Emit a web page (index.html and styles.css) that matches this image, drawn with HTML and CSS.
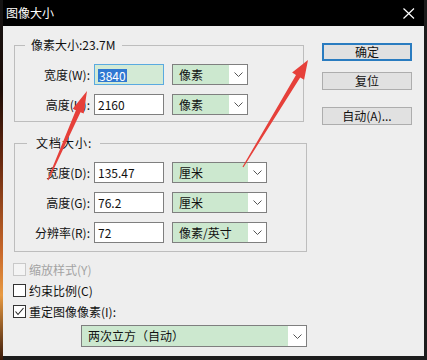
FILE: index.html
```html
<!DOCTYPE html>
<html lang="zh-CN">
<head>
    <meta charset="UTF-8">
    <meta name="viewport" content="width=device-width, initial-scale=1.0">
    <title>图像大小</title>
    <link rel="stylesheet" href="styles.css">
</head>
<body>
    <div class="window">
        <div class="titlebar">
            <span class="title">图像大小</span>
            <svg class="close" width="12" height="11" viewBox="0 0 12 11">
                <path d="M0.5 0.5 L11 10.5 M11 0.5 L0.5 10.5" stroke="#fff" stroke-width="1.2" fill="none"/>
            </svg>
        </div>

        <div class="content">
            <div class="main">
                <fieldset class="group group-pixel">
                    <legend>像素大小:23.7M</legend>
                    <div class="row">
                        <label>宽度(W):</label>
                        <div class="field focused"><span class="sel">3840</span></div>
                        <div class="select">
                            <span class="val">像素</span>
                            <span class="drop"><svg width="9" height="5" viewBox="0 0 9 5"><polyline points="0.5,0.5 4.5,4.5 8.5,0.5" fill="none" stroke="#555"/></svg></span>
                        </div>
                    </div>
                    <div class="row">
                        <label>高度(H):</label>
                        <div class="field">2160</div>
                        <div class="select">
                            <span class="val">像素</span>
                            <span class="drop"><svg width="9" height="5" viewBox="0 0 9 5"><polyline points="0.5,0.5 4.5,4.5 8.5,0.5" fill="none" stroke="#555"/></svg></span>
                        </div>
                    </div>
                </fieldset>

                <fieldset class="group group-doc">
                    <legend>文档大小:</legend>
                    <div class="row">
                        <label>宽度(D):</label>
                        <div class="field">135.47</div>
                        <div class="select">
                            <span class="val">厘米</span>
                            <span class="drop"><svg width="9" height="5" viewBox="0 0 9 5"><polyline points="0.5,0.5 4.5,4.5 8.5,0.5" fill="none" stroke="#555"/></svg></span>
                        </div>
                    </div>
                    <div class="row">
                        <label>高度(G):</label>
                        <div class="field">76.2</div>
                        <div class="select">
                            <span class="val">厘米</span>
                            <span class="drop"><svg width="9" height="5" viewBox="0 0 9 5"><polyline points="0.5,0.5 4.5,4.5 8.5,0.5" fill="none" stroke="#555"/></svg></span>
                        </div>
                    </div>
                    <div class="row">
                        <label>分辨率(R):</label>
                        <div class="field">72</div>
                        <div class="select">
                            <span class="val">像素/英寸</span>
                            <span class="drop"><svg width="9" height="5" viewBox="0 0 9 5"><polyline points="0.5,0.5 4.5,4.5 8.5,0.5" fill="none" stroke="#555"/></svg></span>
                        </div>
                    </div>
                </fieldset>

                <div class="checks">
                    <div class="check disabled"><span class="box"></span>缩放样式(Y)</div>
                    <div class="check"><span class="box"></span>约束比例(C)</div>
                    <div class="check"><span class="box"><svg width="11" height="11" viewBox="0 0 11 11"><polyline points="1.5,5.5 4,8.5 9.5,2" fill="none" stroke="#222" stroke-width="1.1"/></svg></span>重定图像像素(I):</div>
                </div>

                <div class="select wide">
                    <span class="val">两次立方（自动）</span>
                    <span class="drop"><svg width="9" height="5" viewBox="0 0 9 5"><polyline points="0.5,0.5 4.5,4.5 8.5,0.5" fill="none" stroke="#555"/></svg></span>
                </div>
            </div>

            <div class="buttons">
                <div class="btn default">确定</div>
                <div class="btn">复位</div>
                <div class="btn auto">自动(A)...</div>
            </div>
        </div>
    </div>

    <!-- 红色标注箭头 -->
    <svg class="marks" width="427" height="360" viewBox="0 0 427 360">
        <polygon points="47.5,179.8 75.9,110.2 72.7,108.8 87,91 83.7,113.6 80.5,112.2 48.5,180.2" fill="#e6403a"/>
        <polygon points="242.5,166.7 296,74.9 292.1,72.6 308,60 304.1,79.8 300.2,77.5 243.5,167.3" fill="#e6403a"/>
    </svg>
</body>
</html>
```

FILE: styles.css
```css
* {
    box-sizing: border-box;
}

body {
    margin: 0;
    width: 427px;
    height: 360px;
    overflow: hidden;
    position: relative;
    font-family: "Noto Sans CJK SC", "Microsoft YaHei", sans-serif;
    font-size: 12px;
    color: #111;
    background:
        linear-gradient(to bottom, #141414 0, #1e0c06 25%, #6a2a10 45%, #c8682a 70%, #e89a42 82%, #3a1a0a 100%) left top / 3px 100% no-repeat,
        #1c1c1c;
}

.window {
    margin: 0 3px;
    width: 421px;
    height: 356px;
    display: flex;
    flex-direction: column;
}

.titlebar {
    height: 26px;
    flex: none;
    background: #000;
    color: #fff;
    display: flex;
    align-items: center;
    justify-content: space-between;
    padding: 0 9px 0 3px;
}

.title {
    font-size: 12px;
    line-height: 16px;
}

.content {
    flex: 1;
    background: #eeeeee;
    display: flex;
    padding: 11px 12px 0 10px;
}

.main {
    width: 294px;
}

/* 分组框 */
.group {
    margin: 0 0 0 1px;
    padding: 11px 0 6px 0;
    border: 1px solid #bdbdbd;
    min-inline-size: 0;
}

.group-pixel {
    width: 290px;
}

.group-doc {
    width: 293px;
    margin-top: 13px;
    padding-bottom: 8px;
}

.group legend {
    line-height: 16px;
    margin-left: 10px;
    padding: 0 7px 0 6px;
}

.group-doc legend {
    margin-left: 12px;
    padding: 0 8px 0 9px;
    letter-spacing: 1px;
}

.row {
    display: flex;
    align-items: center;
    height: 21px;
    margin-bottom: 9px;
}

.row:last-child {
    margin-bottom: 0;
}

.row label {
    width: 75px;
    margin-right: 4px;
    text-align: right;
    white-space: nowrap;
}

.field {
    width: 70px;
    height: 21px;
    border: 1px solid #7f7f7f;
    background: #fff;
    padding-left: 3px;
    line-height: 19px;
}

.field.focused {
    border-color: #5aaae0;
    background: #d3ead5;
}

.sel {
    display: inline-block;
    background: #2f78d2;
    color: #fff;
    line-height: 13px;
    padding: 0 1px 0 1px;
    vertical-align: middle;
    margin-top: -2px;
}

/* 下拉框 */
.select {
    display: flex;
    width: 76px;
    height: 21px;
    margin-left: 8px;
    border: 1px solid #7f7f7f;
    background: #fff;
}

.group-doc .select {
    width: 95px;
}

.select .val {
    flex: 1;
    background: #cce8cf;
    padding-left: 6px;
    line-height: 19px;
    white-space: nowrap;
}

.select .drop {
    width: 18px;
    display: flex;
    align-items: center;
    justify-content: center;
}

.select.wide {
    width: 226px;
    height: 22px;
    margin: 3px 0 0 68px;
}

.select.wide .val {
    line-height: 20px;
}

/* 复选框 */
.checks {
    margin-top: 7px;
}

.check {
    display: flex;
    align-items: center;
    height: 21px;
    white-space: nowrap;
}

.check .box {
    width: 13px;
    height: 13px;
    border: 1px solid #333;
    background: #fff;
    margin-right: 3px;
    display: flex;
    align-items: center;
    justify-content: center;
}

.check.disabled {
    color: #a3a3a3;
}

.check.disabled .box {
    border-color: #c9c9c9;
    background: #f4f4f4;
}

/* 按钮 */
.buttons {
    margin-left: 15px;
    padding-top: 6px;
    width: 90px;
}

.btn {
    height: 18px;
    background: #e1e1e1;
    border: 1px solid #adadad;
    text-align: center;
    line-height: 16px;
}

.btn.default {
    border: 2px solid #2a7cc0;
    line-height: 14px;
    margin-bottom: 11px;
}

.btn.auto {
    margin-top: 17px;
}

.marks {
    position: absolute;
    left: 0;
    top: 0;
    pointer-events: none;
}
```
